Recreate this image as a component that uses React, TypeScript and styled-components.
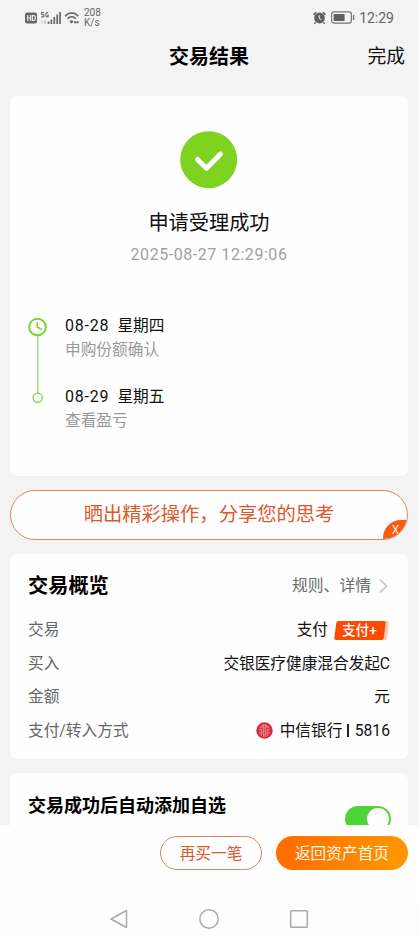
import React from "react";
import styled, { createGlobalStyle, css } from "styled-components";

const GlobalStyle = createGlobalStyle`
  * { box-sizing: border-box; }
  body {
    margin: 0;
    background: #f3f3f3;
    color: #111;
    font-family: Roboto, "Noto Sans CJK SC", sans-serif;
    overflow: hidden;
  }
  svg { display: block; flex: none; }
`;

const Screen = styled.div`
  width: 419px;
  height: 938px;
  display: flex;
  flex-direction: column;
  overflow: hidden;
  background: #f3f3f3;
`;

const StatusBar = styled.div`
  flex: none;
  height: 34px;
  padding: 1px 25px 0;
  display: flex;
  justify-content: space-between;
  align-items: center;
  color: #666;
`;

const StatusGroup = styled.div<{ $gap: number }>`
  display: flex;
  align-items: center;
  gap: ${(p) => p.$gap}px;
`;

const NetSpeed = styled.div`
  font: 10px/10px Roboto, sans-serif;
  margin-left: 1px;
`;

const Clock = styled.span`
  font: 14px/18px Roboto, sans-serif;
`;

const Header = styled.header`
  flex: none;
  height: 62px;
  padding: 9px 14px 0 13px;
  display: grid;
  grid-template-columns: 80px 1fr 80px;
  line-height: 28px;
`;

const Title = styled.h1`
  grid-column: 2;
  margin: 0;
  text-align: center;
  font-size: 20px;
  font-weight: 700;
  line-height: 28px;
  color: #000;
`;

const Done = styled.span`
  text-align: right;
  font-size: 18.8px;
`;

const Content = styled.main`
  flex: 1;
  min-height: 0;
  overflow: hidden;
  padding: 0 11px 0 10px;
  display: flex;
  flex-direction: column;
  gap: 14px;
`;

const Card = styled.section<{ $height: number }>`
  flex: none;
  height: ${(p) => p.$height}px;
  background: #fefefe;
  border-radius: 7px;
  padding: 0 18px;
`;

const Result = styled.div`
  height: 214px;
  padding-top: 35px;
  display: flex;
  flex-direction: column;
  align-items: center;
`;

const ResultTitle = styled.div`
  margin-top: 20px;
  font-size: 20.2px;
  line-height: 28px;
`;

const ResultTime = styled.div`
  margin-top: 8px;
  font-size: 16px;
  line-height: 20px;
  letter-spacing: 0.55px;
  color: #a0a0a0;
`;

const Timeline = styled.div`
  display: flex;
  gap: 18px;
`;

const Steps = styled.div`
  display: flex;
  flex-direction: column;
  gap: 23px;
  padding-top: 4px;
`;

const Step = styled.div`
  font-size: 15.7px;
  line-height: 24px;
`;

const StepDate = styled.div`
  display: flex;
  gap: 8px;
  & > span:first-child { font-size: 16px; letter-spacing: 0.8px; }
`;

const StepNote = styled.div`
  color: #999;
`;

const Banner = styled.div`
  flex: none;
  position: relative;
  height: 50px;
  border: 1px solid #dd8563;
  border-radius: 25px;
  background: #fefefe;
  overflow: hidden;
  text-align: center;
  font-size: 19.3px;
  line-height: 48px;
  color: #db592b;
`;

const CloseTag = styled.div`
  position: absolute;
  right: -1px;
  bottom: -1px;
  width: 25px;
  height: 20px;
  border-top-left-radius: 18px;
  background: #fa5b12;
  color: #fff0e5;
  font-size: 12px;
  line-height: 20px;
`;

const SectionHead = styled.div`
  display: flex;
  justify-content: space-between;
  align-items: center;
  height: 59px;
  padding-top: 5px;
`;

const SectionTitle = styled.h2<{ $size: number }>`
  margin: 0;
  font-size: ${(p) => p.$size}px;
  font-weight: 700;
  line-height: 28px;
  color: #000;
`;

const RuleLink = styled.div`
  display: flex;
  align-items: center;
  gap: 8px;
  padding-right: 2px;
  font-size: 15.8px;
  line-height: 24px;
  color: #6b6b6b;
`;

const Row = styled.div`
  height: 33.5px;
  display: flex;
  justify-content: space-between;
  align-items: center;
  font-size: 15.7px;
  line-height: 24px;
`;

const Rows = styled.div`
  padding-top: 0.5px;
`;

const Label = styled.span`
  color: #666;
`;

const Value = styled.span<{ $tight?: boolean }>`
  display: flex;
  align-items: center;
  ${(p) => p.$tight && css`letter-spacing: -0.05px;`}
`;

const PayBadge = styled.span`
  position: relative;
  width: 55px;
  height: 19px;
  margin: 0 1px 0 6px;
  display: flex;
  color: #fff;
  font-size: 13.6px;
  font-weight: 500;
  line-height: 19px;
`;

const BadgeShape = styled.svg`
  position: absolute;
  inset: 0;
`;

const BadgeText = styled.span`
  position: relative;
  padding-left: 8px;
`;

const BankLogo = styled.svg`
  margin-right: 7px;
`;

const Divider = styled.span`
  width: 1.3px;
  height: 13px;
  margin: 0 6px 0 5px;
  background: #222;
`;

const AutoRow = styled.div`
  display: flex;
  justify-content: space-between;
  align-items: flex-start;
  padding-top: 19px;
  margin-right: -1px;
`;

const Switch = styled.div`
  width: 46px;
  height: 26px;
  margin-top: 14px;
  padding: 2px;
  display: flex;
  justify-content: flex-end;
  border-radius: 13px;
  background: #50d338;
`;

const Knob = styled.div`
  width: 22px;
  height: 22px;
  border-radius: 50%;
  background: #fefefe;
`;

const Actions = styled.footer`
  flex: none;
  height: 75px;
  padding: 11px 11px 0;
  display: flex;
  justify-content: flex-end;
  gap: 14px;
  background: #fefefe;
`;

const Button = styled.button<{ $primary?: boolean }>`
  width: ${(p) => (p.$primary ? 132 : 102)}px;
  height: 34px;
  padding: 1px 0 0;
  border: ${(p) => (p.$primary ? "0" : "1px solid #d98462")};
  border-radius: 17px;
  background: ${(p) => (p.$primary ? "linear-gradient(100deg, #ff6a00, #ff9900)" : "#fefefe")};
  color: ${(p) => (p.$primary ? "#fff7e6" : "#dc582b")};
  font: 15.7px/24px Roboto, "Noto Sans CJK SC", sans-serif;
`;

const NavBar = styled.nav`
  flex: none;
  height: 38px;
  padding: 0 1px 1px 0;
  display: flex;
  align-items: center;
  justify-content: center;
  gap: 70px;
  background: #fdfdfd;
`;

const steps = [
  { date: "08-28", day: "星期四", note: "申购份额确认" },
  { date: "08-29", day: "星期五", note: "查看盈亏" },
];

const SignalIcons = () => (
  <svg width="55" height="16" viewBox="0 0 55 16">
    <rect x="0" y="2.5" width="12" height="11" rx="2" fill="#666" />
    <path d="M2.7 5v6M5.6 5v6M2.7 8h2.9M7.4 5.5h1.2c2.3 0 2.3 5 0 5H7.4z" fill="none" stroke="#f3f3f3" strokeWidth="1.1" />
    <path d="M19 2.5h-2.3v2h1.6c1 0 1 2.4 0 2.4h-1.8M23.2 3c-1-.9-2.4-.6-2.4 1.7s1.2 2.5 2.4 1.8V5h-1" fill="none" stroke="#666" strokeWidth="1.1" />
    <path d="M17 10.5v3M19.3 10.5h1.4v3h-1.4z" fill="none" stroke="#c9c9c9" strokeWidth="1" />
    <path d="M23.5 11.5v2.5M26.4 9.5V14M29.3 7v7M32.2 4.6V14M35 2v12" stroke="#666" strokeWidth="1.7" />
    <path d="M40 6.2c4-4.3 9.7-4.3 13.4 0M42.4 8.8c2.7-2.8 6-2.8 8.6 0" fill="none" stroke="#666" strokeWidth="1.4" />
    <path d="M44.5 11.2c1.5-1.3 3-1.2 4 0l-2 2.5z" fill="#666" />
    <path d="M49 12.2h2.2M51.6 12.2h2" stroke="#666" strokeWidth="2" />
  </svg>
);

const AlarmIcon = () => (
  <svg width="13" height="14" viewBox="0 0 13 14">
    <circle cx="6.5" cy="7" r="5.4" fill="#606060" />
    <path d="M.8 4.2C1 2.7 2 1.8 3.4 1.5M12.2 4.2c-.2-1.5-1.2-2.4-2.6-2.7M2.6 11.3l-1.2 1.4M10.4 11.3l1.2 1.4" stroke="#606060" strokeWidth="1.4" fill="none" />
    <path d="M6.2 4.2v3.2l2.2 1.4" stroke="#f3f3f3" strokeWidth="1" fill="none" />
  </svg>
);

const BatteryIcon = () => (
  <svg width="24" height="13" viewBox="0 0 24 13">
    <rect x=".6" y=".9" width="19.8" height="11.2" rx="2.6" fill="none" stroke="#777" strokeWidth="1.2" />
    <rect x="2.6" y="2.9" width="11" height="7.2" rx="0.6" fill="#606060" />
    <path d="M22.6 4v5" stroke="#777" strokeWidth="1.4" />
  </svg>
);

export default function App() {
  return (
    <>
      <GlobalStyle />
      <Screen>
        <StatusBar>
          <StatusGroup $gap={3}>
            <SignalIcons />
            <NetSpeed>208<br />K/s</NetSpeed>
          </StatusGroup>
          <StatusGroup $gap={4.5}>
            <AlarmIcon />
            <BatteryIcon />
            <Clock>12:29</Clock>
          </StatusGroup>
        </StatusBar>
        <Header>
          <Title>交易结果</Title>
          <Done>完成</Done>
        </Header>
        <Content>
          <Card $height={380}>
            <Result>
              <svg width="58" height="58" viewBox="0 0 58 58">
                <circle cx="28.700" cy="28.700" r="28.500" fill="#7ed321" />
                <path d="M17.500 28.500l9 8.700L40.500 23" fill="none" stroke="#fff" strokeWidth="5" strokeLinecap="round" strokeLinejoin="round" />
              </svg>
              <ResultTitle>申请受理成功</ResultTitle>
              <ResultTime>2025-08-27 12:29:06</ResultTime>
            </Result>
            <Timeline>
              <svg width="19" height="100" viewBox="0 0 19 100">
                <circle cx="9.500" cy="17" r="8.300" fill="none" stroke="#79d52f" strokeWidth="2" />
                <path d="M9.300 12.500V17l3.800 2.300" fill="none" stroke="#79d52f" strokeWidth="1.600" strokeLinecap="round" />
                <path d="M9.800 26v57" stroke="#9bd673" strokeWidth="1.400" />
                <circle cx="9.700" cy="87.800" r="4.600" fill="none" stroke="#84d149" strokeWidth="1.300" />
              </svg>
              <Steps>
                {steps.map((s) => (
                  <Step key={s.date}>
                    <StepDate><span>{s.date}</span><span>{s.day}</span></StepDate>
                    <StepNote>{s.note}</StepNote>
                  </Step>
                ))}
              </Steps>
            </Timeline>
          </Card>

          <Banner>
            晒出精彩操作，分享您的思考
            <CloseTag>X</CloseTag>
          </Banner>

          <Card $height={205}>
            <SectionHead>
              <SectionTitle $size={20.2}>交易概览</SectionTitle>
              <RuleLink>
                规则、详情
                <svg width="9" height="16" viewBox="0 0 9 16">
                  <path d="M1 1.500L7.500 8 1 14.500" fill="none" stroke="#c4c4c4" strokeWidth="1.700" />
                </svg>
              </RuleLink>
            </SectionHead>
            <Rows>
              <Row>
                <Label>交易</Label>
                <Value>
                  支付
                  <PayBadge>
                    <BadgeShape width="55" height="19" viewBox="0 0 55 19">
                      <path d="M50 0h3q2 0 1.800 2L53 17q-.2 2-2 2h-3z" fill="#ffc5aa" />
                      <path d="M4.500 0H50q2 0 1.700 2L49.800 17q-.3 2-2.300 2H2Q0 19 .3 17L2.300 2q.2-2 2.200-2z" fill="#fc4c04" />
                    </BadgeShape>
                    <BadgeText>支付+</BadgeText>
                  </PayBadge>
                </Value>
              </Row>
              <Row>
                <Label>买入</Label>
                <Value $tight>交银医疗健康混合发起C</Value>
              </Row>
              <Row>
                <Label>金额</Label>
                <Value>元</Value>
              </Row>
              <Row>
                <Label>支付/转入方式</Label>
                <Value>
                  <BankLogo width="17" height="17" viewBox="0 0 17 17">
                    <circle cx="8.500" cy="8.500" r="8.200" fill="#d8283a" />
                    <path d="M7.700 2v13M9.300 2v13M5.700 14V7.300H3M11.300 14V7.300H14M4 12V9.500M13 12V9.500M3.500 5.200h2.700V3M13.500 5.200h-2.700V3" fill="none" stroke="#f3b4ba" strokeWidth=".8" />
                  </BankLogo>
                  中信银行<Divider />5816
                </Value>
              </Row>
            </Rows>
          </Card>

          <Card $height={90}>
            <AutoRow>
              <SectionTitle $size={18}>交易成功后自动添加自选</SectionTitle>
              <Switch><Knob /></Switch>
            </AutoRow>
          </Card>
        </Content>
        <Actions>
          <Button>再买一笔</Button>
          <Button $primary>返回资产首页</Button>
        </Actions>
        <NavBar>
          <svg width="20" height="20" viewBox="0 0 20 20">
            <path d="M17.500 1.500v17L2 10z" fill="none" stroke="#aaa" strokeWidth="1.500" strokeLinejoin="round" />
          </svg>
          <svg width="20" height="20" viewBox="0 0 20 20">
            <circle cx="10" cy="10" r="9.200" fill="none" stroke="#aaa" strokeWidth="1.500" />
          </svg>
          <svg width="20" height="20" viewBox="0 0 20 20">
            <rect x="1.700" y="1.700" width="16.600" height="16.600" rx=".8" fill="none" stroke="#aaa" strokeWidth="1.500" />
          </svg>
        </NavBar>
      </Screen>
    </>
  );
}
